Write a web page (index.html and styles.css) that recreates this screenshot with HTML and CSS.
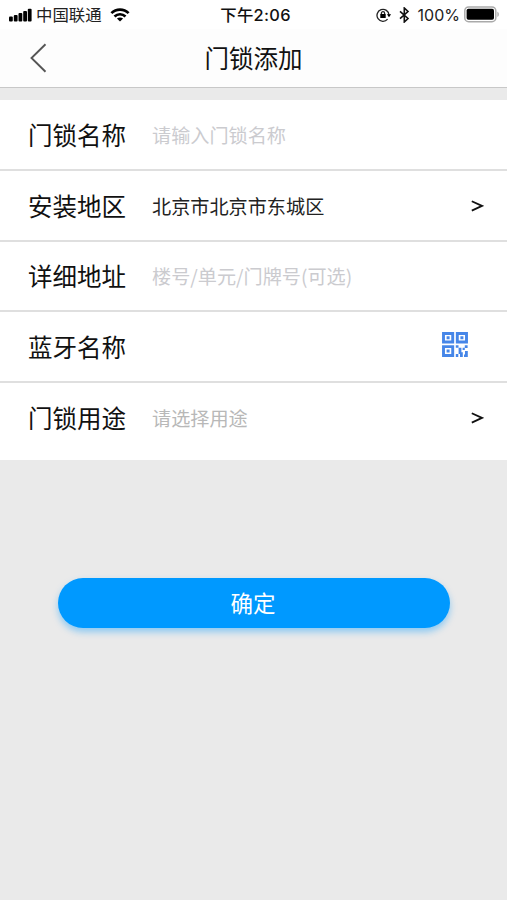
FILE: index.html
```html
<!DOCTYPE html>
<html lang="zh-CN">
<head>
<meta charset="utf-8">
<title>门锁添加</title>
<link rel="stylesheet" href="styles.css">
</head>
<body>
<header class="top">
  <div class="status">
    <div class="status-left">
      <svg class="signal" width="24" height="14" viewBox="0 0 24 14"><rect x="0" y="8.5" width="3.8" height="5" rx="1"/><rect x="4.8" y="7" width="3.8" height="6.5" rx="1"/><rect x="9.5" y="5" width="3.8" height="8.5" rx="1"/><rect x="14.2" y="3" width="3.8" height="10.5" rx="1"/><rect x="18.8" y="0.8" width="3.8" height="12.7" rx="1"/></svg>
      <span class="carrier">中国联通</span>
      <svg class="wifi" width="20" height="14" viewBox="0 0 20 14"><g fill="none" stroke="#000" stroke-width="2.7"><path d="M1.4 5.1C6.2 .4 13.8 .4 18.6 5.1"/><path d="M4.5 8.4C7.6 5.5 12.4 5.5 15.5 8.4"/></g><path d="M6.9 10.6c2-1.4 4.2-1.4 6.2 0L10 13.6z"/></svg>
    </div>
    <div class="time">下午2:06</div>
    <div class="status-right">
      <svg class="lock" width="16" height="14" viewBox="0 0 16 14"><g fill="none" stroke="#222" stroke-width="1.3"><path d="M11.6 11.2A6 6 0 1 1 13 7"/><path d="M5.4 6.5V5.3a1.6 1.6 0 0 1 3.2 0v1.2"/></g><path d="M4.3 6h5.4v4H4.3zM10.9 6.3h4.2L13 9.2z"/></svg>
      <svg class="bluetooth" width="11" height="16" viewBox="0 0 11 16"><path d="M1 4.3l8 7.2L5.3 15V1L9 4.5l-8 7.2" fill="none" stroke="#111" stroke-width="1.6"/></svg>
      <span class="percent">100%</span>
      <svg class="battery" width="36" height="17" viewBox="0 0 36 17"><rect x=".8" y=".9" width="31" height="14.8" rx="3.8" fill="#fff" stroke="#aaa" stroke-width="1.5"/><rect x="2.6" y="2.8" width="27.4" height="11" rx="1.8"/><path d="M33.4 5.8c1.9.6 1.9 4.6 0 5.2z" fill="#aaa"/></svg>
    </div>
  </div>
  <nav class="nav">
    <svg class="back" width="18" height="30" viewBox="0 0 18 30"><path d="M15.5 1.2L1.5 15l14 13.8" fill="none" stroke="#555" stroke-width="1.9"/></svg>
    <h1 class="title">门锁添加</h1>
  </nav>
</header>
<main class="form">
  <div class="row"><span class="label">门锁名称</span><span class="value hint">请输入门锁名称</span></div>
  <div class="row"><span class="label">安装地区</span><span class="value">北京市北京市东城区</span><svg class="arrow" width="13" height="12" viewBox="0 0 13 12"><path d="M.8 1.2L11 5.9.8 10.6" fill="none" stroke="#111" stroke-width="1.8"/></svg></div>
  <div class="row"><span class="label">详细地址</span><span class="value hint">楼号/单元/门牌号(可选)</span></div>
  <div class="row"><span class="label">蓝牙名称</span><span class="value"></span>
    <svg class="qr" width="26" height="25" viewBox="0 0 26 25"><g fill="none" stroke="#4686e8" stroke-width="2.9"><path d="M1.5 1.5h9.2v8.5H1.5zM15.3 1.5h9.2v8.5h-9.2zM1.5 14.6h9.2v8.9H1.5z"/></g><g fill="#4686e8"><path d="M4.6 4.3h3v3h-3zM18.4 4.3h3v3h-3zM4.6 17.5h3v3h-3z"/><path d="M13.8 13.2h2.7v2.5h-2.7zM16.6 15.8h2.8v4.4h1.4v4.7H18v-3h-1.4zM22.8 13.2h2.8v2.7h-2.8zM20.6 15.8h2.2v2.2h-2.2zM23 19h2.8v5.9h-3.8v-2.5h1zM13.8 22h2.5v2.9h-2.5z"/></g></svg>
  </div>
  <div class="row last"><span class="label">门锁用途</span><span class="value choose">请选择用途</span><svg class="arrow" width="13" height="12" viewBox="0 0 13 12"><path d="M.8 1.2L11 5.9.8 10.6" fill="none" stroke="#111" stroke-width="1.8"/></svg></div>
</main>
<button class="submit" type="button">确定</button>
</body>
</html>
```
FILE: styles.css
```css
* { box-sizing: border-box; }
body {
  margin: 0;
  min-height: 900px;
  background: #eaeaea;
  color: #111;
  font-family: "Noto Sans CJK SC", sans-serif;
}
svg { display: block; flex: none; }
.top { height: 88px; background: #fdfdfd; border-bottom: 1px solid #c8c8c8; }
.status {
  display: grid;
  grid-template-columns: 1fr auto 1fr;
  align-items: center;
  height: 29px;
  padding: 0 7px 0 9px;
  background: #fff;
  font-size: 16.4px;
  line-height: 28px;
}
.status-left, .status-right { display: flex; align-items: center; }
.status-right { justify-content: flex-end; }
.carrier { margin-left: 3px; padding-bottom: 2px; line-height: 26px; color: #222; }
.wifi { margin-left: 8px; }
.time { padding-left: 2px; font-family: Inter, "Noto Sans CJK SC", sans-serif; font-weight: 500; font-size: 16.4px; letter-spacing: .3px; }
.bluetooth { margin: 0 8px 0 7px; }
.percent { font-family: Inter, sans-serif; font-size: 16px; color: #222; }
.battery { margin-left: 4px; }
.nav {
  display: grid;
  grid-template-columns: 60px 1fr 60px;
  align-items: center;
  height: 58px;
}
.back { margin-left: 30px; }
.title { margin: 0; font-size: 24.5px; line-height: 36px; font-weight: 400; text-align: center; }
.form { margin-top: 12px; background: #fff; }
.row {
  display: flex;
  align-items: center;
  height: 70.75px;
  padding: 1px 23px 0 28px;
  border-bottom: 2px solid #dfdfdf;
}
.last { height: 77.4px; padding-bottom: 9px; border: 0; }
.label { width: 124px; font-size: 24.5px; line-height: 36px; white-space: nowrap; }
.value { flex: 1; font-size: 19.15px; line-height: 28px; color: #222; white-space: nowrap; }
.hint { color: #cbcbcf; }
.choose { color: #b8b8b8; }
.arrow { margin-top: 1px; }
.qr { margin: -6px 16px 0 0; }
.submit {
  display: block;
  width: 392px;
  height: 50px;
  margin: 117.6px 0 0 58px;
  padding: 0 2px 2px 0;
  border: 0;
  border-radius: 25px;
  background: #0099ff;
  box-shadow: 0 4px 7px rgba(0, 153, 255, .4);
  color: #fff;
  font: 22.5px/48px "Noto Sans CJK SC", sans-serif;
}
```
